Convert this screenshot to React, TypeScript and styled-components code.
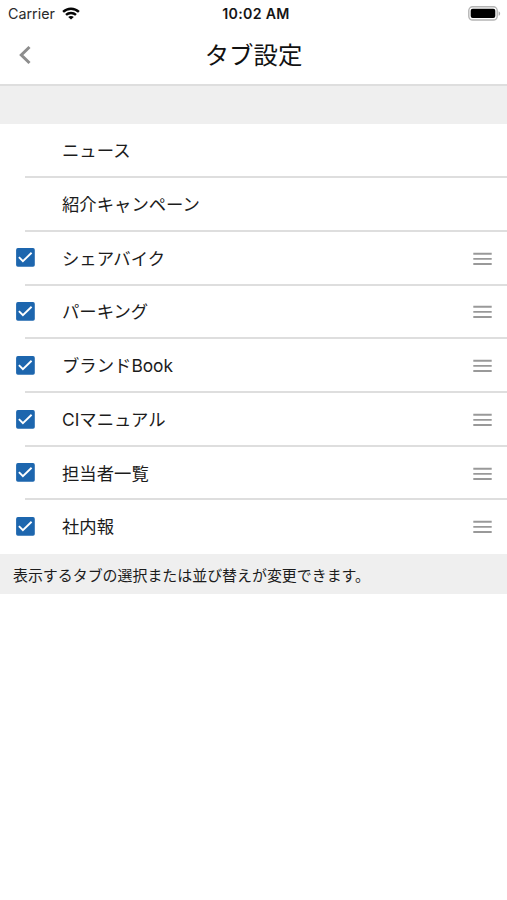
import React, { useState } from "react";
import styled, { createGlobalStyle } from "styled-components";

const GlobalStyle = createGlobalStyle`
  * { box-sizing: border-box; }
  body {
    margin: 0;
    background: #fff;
    color: #1c1c1c;
    font-family: Inter, "Noto Sans CJK JP", sans-serif;
  }
`;

const Screen = styled.main`
  width: 100%;
  min-height: 900px;
  background: #fff;
  overflow: hidden;
`;

const StatusBar = styled.div`
  display: grid;
  grid-template-columns: 1fr auto 1fr;
  align-items: center;
  height: 27px;
  padding: 0 6px 0 8px;
`;

const Carrier = styled.div`
  display: flex;
  align-items: center;
  gap: 7px;
  font-size: 14.3px;
  line-height: 18px;
  color: #2a2a2a;
`;

const Clock = styled.div`
  margin-left: 3px;
  font-size: 14.2px;
  line-height: 18px;
  font-weight: 600;
  letter-spacing: 0.3px;
  color: #151515;
`;

const Battery = styled.div`
  display: flex;
  justify-content: flex-end;
`;

const NavBar = styled.header`
  display: grid;
  grid-template-columns: 50px 1fr 50px;
  align-items: center;
  height: 59px;
  padding-bottom: 1px;
  border-bottom: 2px solid #dedede;
`;

const BackButton = styled.button`
  display: flex;
  justify-content: center;
  padding: 0;
  border: 0;
  background: none;
`;

const Title = styled.h1`
  margin: 0;
  font-size: 24.4px;
  line-height: 36px;
  font-weight: 400;
  text-align: center;
  color: #111;
`;

const Spacer = styled.div`
  height: 38.4px;
  background: #efefef;
`;

const TabList = styled.ul`
  margin: 0;
  padding: 0;
  list-style: none;
`;

const TabRow = styled.li`
  display: grid;
  grid-template-columns: 46px 1fr 19px;
  align-items: center;
  height: 53.72px;
  padding: 0 15px 0 16px;

  &:not(:last-child) {
    background: linear-gradient(#dedede, #dedede) 25px 100% / 100% 2px no-repeat;
  }
`;

const CheckButton = styled.button`
  grid-column: 1;
  width: 19px;
  height: 20.6px;
  padding: 0;
  border: 0;
  background: none;
  line-height: 0;
  display: flex;
  align-items: flex-start;
`;

const Label = styled.span`
  grid-column: 2;
  font-size: 17.35px;
  line-height: 26px;
  white-space: nowrap;
`;

const Note = styled.p`
  height: 40px;
  margin: 0;
  padding: 0 13px;
  background: #efefef;
  font-size: 14.95px;
  line-height: 44px;
  white-space: nowrap;
`;

const WifiIcon = () => (
  <svg width="18" height="13" viewBox="0 0 18 13" fill="none" stroke="#050505" strokeWidth="2.4">
    <path d="M1.1 4.9C5.5.6 12.5.6 16.9 4.9" />
    <path d="M4 7.9c2.8-2.6 7.2-2.6 10 0" />
    <path d="M9 12.5 6.2 9.9c1.6-1.3 4-1.3 5.6 0Z" fill="#050505" stroke="none" />
  </svg>
);

const BatteryIcon = () => (
  <svg width="33" height="15" viewBox="0 0 33 15">
    <rect x=".8" y=".8" width="28.4" height="13.2" rx="3.8" fill="#fff" stroke="#b4b4b4" strokeWidth="1.4" />
    <rect x="2.7" y="2.7" width="24.6" height="9.4" rx="2" fill="#000" />
    <path d="M30.6 5.2c2 .8 2 3.8 0 4.6Z" fill="#aaa" />
  </svg>
);

const BackIcon = () => (
  <svg width="14" height="20" viewBox="0 0 14 20" fill="none" stroke="#8d8d8d" strokeWidth="3">
    <path d="M11.5 2 3.3 10l8.2 8" />
  </svg>
);

const CheckIcon = ({ checked }: { checked: boolean }) => (
  <svg width="19" height="19" viewBox="0 0 19 19" fill="none">
    <rect x=".1" y=".1" width="18.7" height="18.7" rx="1.8" fill={checked ? "#1d66ae" : "#fff"} stroke={checked ? "none" : "#999"} />
    {checked && <path d="m2.9 9.1 4 4.1 8.7-8.4" stroke="#fff" strokeWidth="1.9" />}
  </svg>
);

const DragIcon = () => (
  <svg width="19" height="14" viewBox="0 0 19 14" stroke="#999" strokeWidth="1.9">
    <path d="M.3 1.8h18.4M.3 6.9h18.4M.3 12h18.4" />
  </svg>
);

const fixedTabs = ["ニュース", "紹介キャンペーン"];
const optionalTabs = ["シェアバイク", "パーキング", "ブランドBook", "CIマニュアル", "担当者一覧", "社内報"];

const OptionalTab = ({ name }: { name: string }) => {
  const [checked, setChecked] = useState(true);
  return (
    <TabRow>
      <CheckButton role="checkbox" aria-checked={checked} aria-label={name} onClick={() => setChecked(!checked)}>
        <CheckIcon checked={checked} />
      </CheckButton>
      <Label>{name}</Label>
      <DragIcon />
    </TabRow>
  );
};

export default function App() {
  return (
    <Screen lang="ja">
      <GlobalStyle />
      <StatusBar>
        <Carrier>Carrier<WifiIcon /></Carrier>
        <Clock>10:02 AM</Clock>
        <Battery><BatteryIcon /></Battery>
      </StatusBar>
      <NavBar>
        <BackButton aria-label="戻る"><BackIcon /></BackButton>
        <Title>タブ設定</Title>
      </NavBar>
      <Spacer />
      <TabList>
        {fixedTabs.map((name) => <TabRow key={name}><Label>{name}</Label></TabRow>)}
        {optionalTabs.map((name) => <OptionalTab key={name} name={name} />)}
      </TabList>
      <Note>表示するタブの選択または並び替えが変更できます。</Note>
    </Screen>
  );
}
